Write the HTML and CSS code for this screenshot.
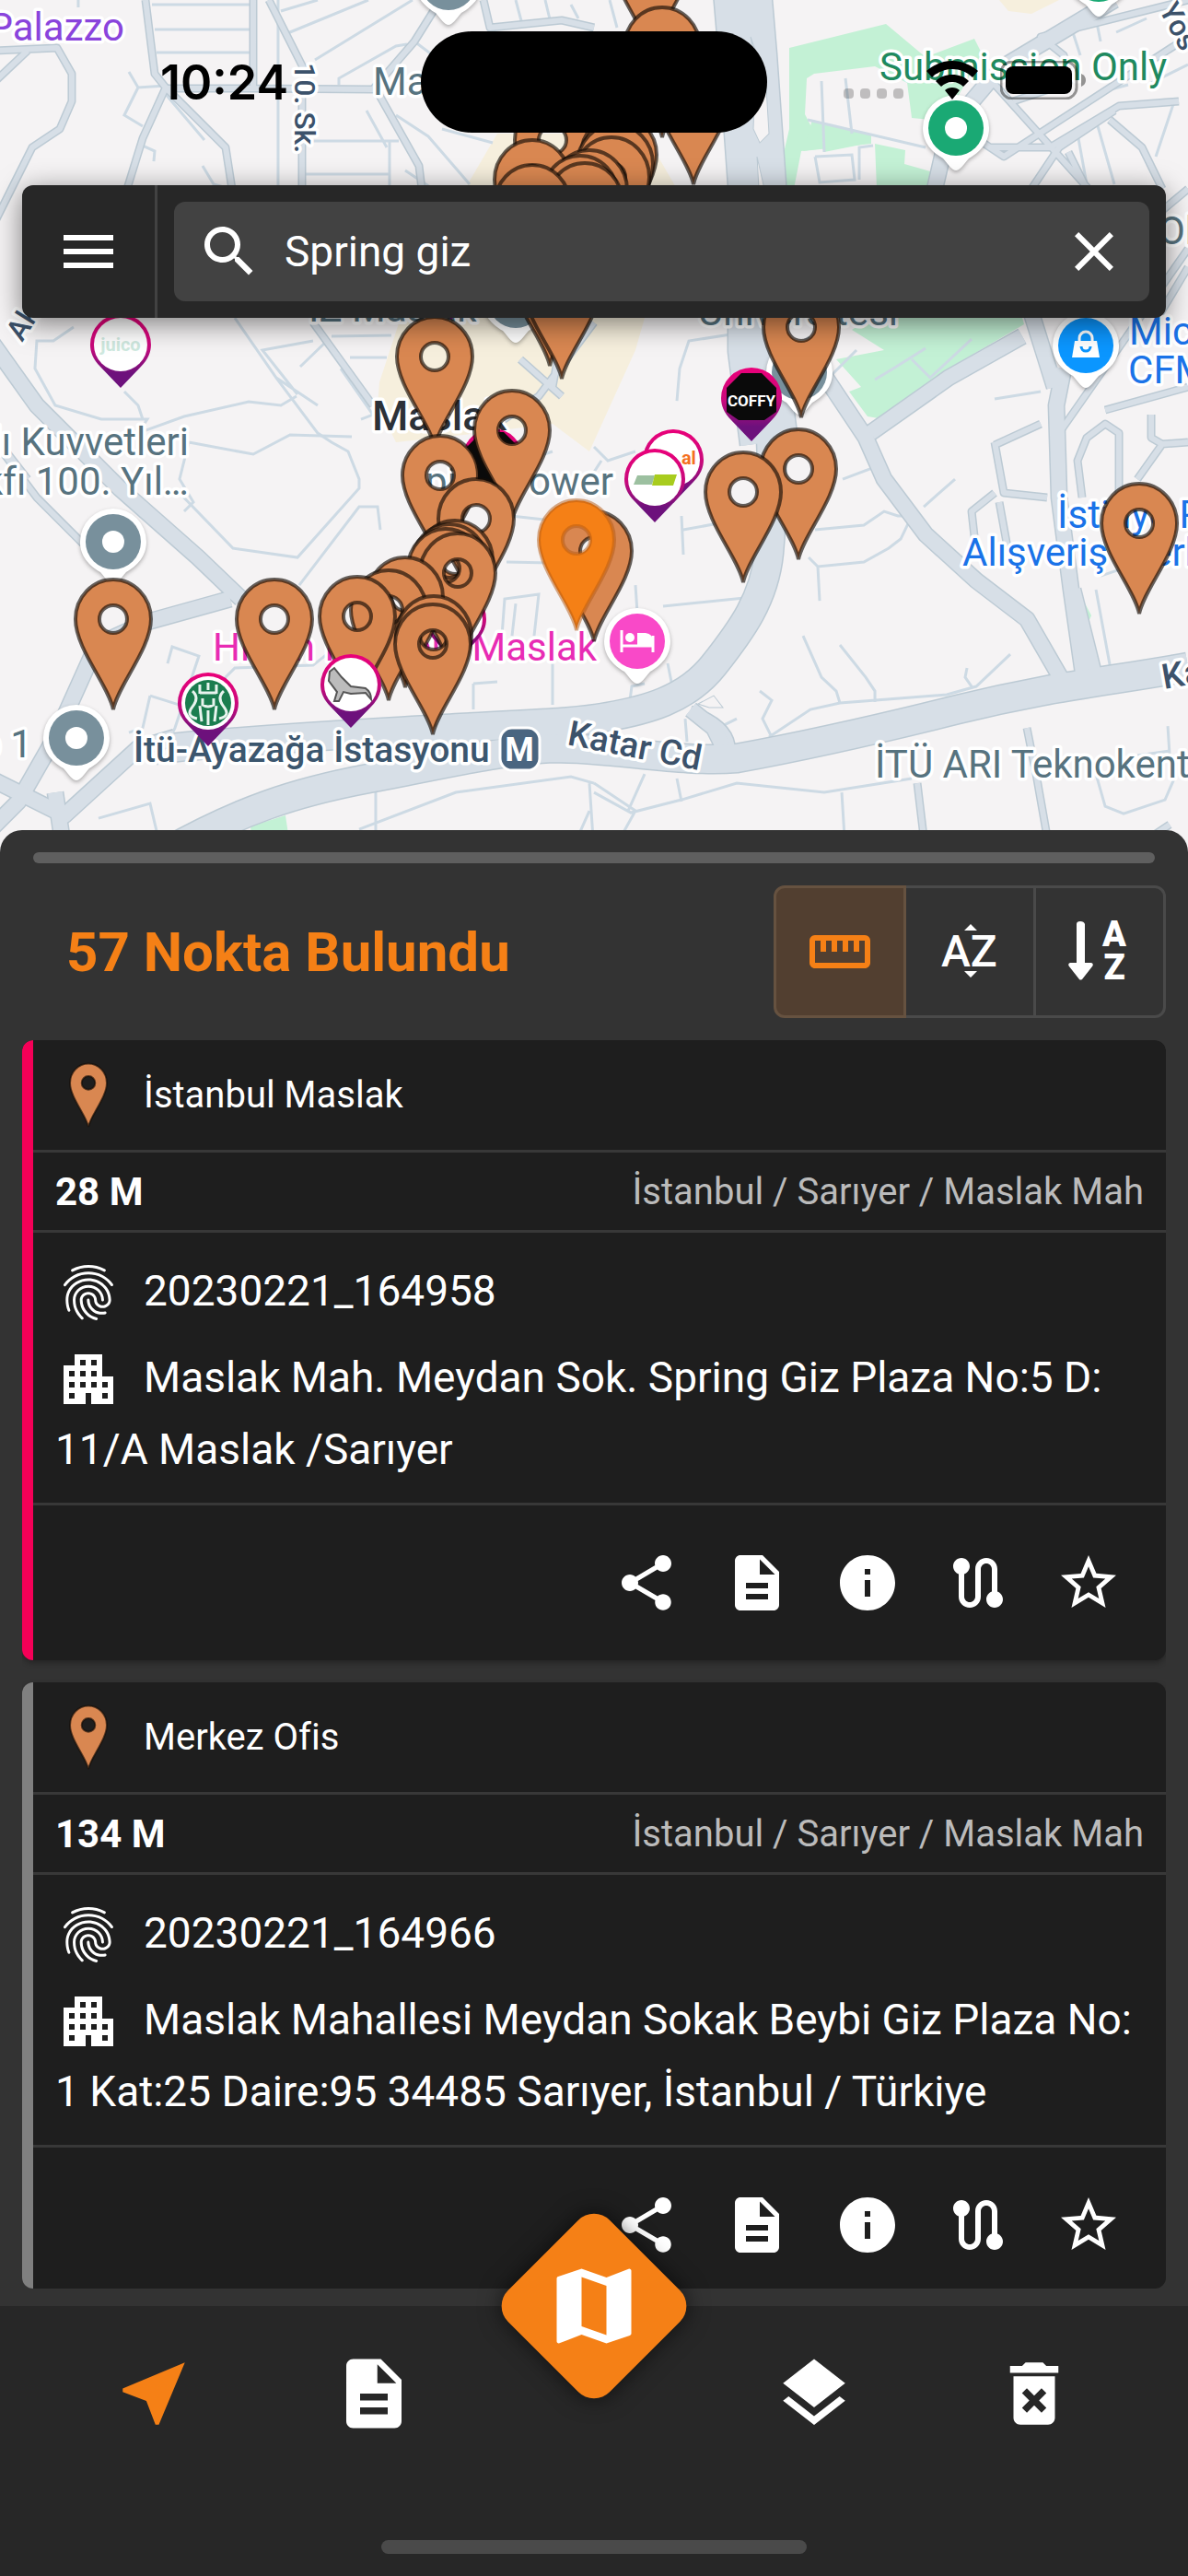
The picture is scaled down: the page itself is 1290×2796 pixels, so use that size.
FILE: index.html
```html
<!DOCTYPE html>
<html lang="tr">
<head>
    <meta charset="UTF-8">
    <meta name="viewport" content="width=device-width, initial-scale=1.0">
    <title>Nokta Arama</title>
    <link rel="stylesheet" href="styles.css">
</head>
<body>
    <!-- Icon set -->
    <svg class="sprite" aria-hidden="true">
        <symbol id="i-menu" viewBox="0 0 24 24"><path d="M3 18h18v-2H3v2zm0-5h18v-2H3v2zm0-7v2h18V6H3z"/></symbol>
        <symbol id="i-search" viewBox="0 0 24 24"><path d="M15.5 14h-.79l-.28-.27C15.41 12.59 16 11.11 16 9.5 16 5.91 13.09 3 9.5 3S3 5.91 3 9.5 5.91 16 9.5 16c1.61 0 3.09-.59 4.23-1.57l.27.28v.79l5 4.99L20.49 19l-4.99-5zm-6 0C7.01 14 5 11.99 5 9.5S7.01 5 9.5 5 14 7.01 14 9.5 11.99 14 9.5 14z"/></symbol>
        <symbol id="i-close" viewBox="0 0 24 24"><path d="M19 6.41L17.59 5 12 10.59 6.41 5 5 6.41 10.59 12 5 17.59 6.41 19 12 13.41 17.59 19 19 17.59 13.41 12z"/></symbol>
        <symbol id="i-ruler" viewBox="0 0 24 24"><path d="M21 6H3c-1.1 0-2 .9-2 2v8c0 1.1.9 2 2 2h18c1.1 0 2-.9 2-2V8c0-1.1-.9-2-2-2zm0 10H3V8h2v4h2V8h2v4h2V8h2v4h2V8h2v4h2V8h2v8z"/></symbol>
        <symbol id="i-share" viewBox="0 0 24 24"><path d="M18 16.08c-.76 0-1.44.3-1.96.77L8.91 12.7c.05-.23.09-.46.09-.7s-.04-.47-.09-.7l7.05-4.11c.54.5 1.25.81 2.04.81 1.66 0 3-1.34 3-3s-1.34-3-3-3-3 1.34-3 3c0 .24.04.47.09.7L8.04 9.81C7.5 9.31 6.79 9 6 9c-1.66 0-3 1.34-3 3s1.34 3 3 3c.79 0 1.5-.31 2.04-.81l7.12 4.16c-.05.21-.08.43-.08.65 0 1.61 1.31 2.92 2.92 2.92s2.92-1.31 2.92-2.92-1.31-2.92-2.92-2.92z"/></symbol>
        <symbol id="i-doc" viewBox="0 0 24 24"><path d="M14 2H6c-1.1 0-1.99.9-1.99 2L4 20c0 1.1.89 2 1.99 2H18c1.1 0 2-.9 2-2V8l-6-6zm2 16H8v-2h8v2zm0-4H8v-2h8v2zm-3-5V3.5L18.5 9H13z"/></symbol>
        <symbol id="i-info" viewBox="0 0 24 24"><path d="M12 2C6.48 2 2 6.48 2 12s4.48 10 10 10 10-4.48 10-10S17.52 2 12 2zm1 15h-2v-6h2v6zm0-8h-2V7h2v2z"/></symbol>
        <symbol id="i-route" viewBox="0 0 24 24"><path d="M19 15.18V7c0-2.21-1.79-4-4-4s-4 1.79-4 4v10c0 1.1-.9 2-2 2s-2-.9-2-2V8.82C8.16 8.4 9 7.3 9 6c0-1.66-1.34-3-3-3S3 4.34 3 6c0 1.3.84 2.4 2 2.82V17c0 2.21 1.79 4 4 4s4-1.79 4-4V7c0-1.1.9-2 2-2s2 .9 2 2v8.18c-1.16.41-2 1.51-2 2.82 0 1.66 1.34 3 3 3s3-1.34 3-3c0-1.3-.84-2.4-2-2.82z"/></symbol>
        <symbol id="i-star" viewBox="0 0 24 24"><path d="M22 9.24l-7.19-.62L12 2 9.19 8.63 2 9.24l5.46 4.73L5.82 21 12 17.27 18.18 21l-1.63-7.03L22 9.24zM12 15.4l-3.76 2.27 1-4.28-3.32-2.88 4.38-.38L12 6.1l1.71 4.04 4.38.38-3.32 2.88 1 4.28L12 15.4z"/></symbol>
        <symbol id="i-map" viewBox="0 0 24 24"><path d="M20.5 3l-.16.03L15 5.1 9 3 3.36 4.9c-.21.07-.36.25-.36.48V20.5c0 .28.22.5.5.5l.16-.03L9 18.9l6 2.1 5.64-1.9c.21-.07.36-.25.36-.48V3.5c0-.28-.22-.5-.5-.5zM15 19l-6-2.11V5l6 2.11V19z"/></symbol>
        <symbol id="i-near" viewBox="0 0 24 24"><path d="M21 3L3 10.53v.98l6.84 2.65L12.48 21h.98L21 3z"/></symbol>
        <symbol id="i-layers" viewBox="0 0 24 24"><path d="M11.99 18.54l-7.37-5.73L3 14.07l9 7 9-7-1.63-1.27-7.38 5.74zM12 16l7.36-5.73L21 9l-9-7-9 7 1.63 1.27L12 16z"/></symbol>
        <symbol id="i-trash" viewBox="0 0 24 24"><path d="M6 19c0 1.1.9 2 2 2h8c1.1 0 2-.9 2-2V7H6v12zm2.46-7.12l1.41-1.41L12 12.59l2.12-2.12 1.41 1.41L13.41 14l2.12 2.12-1.41 1.41L12 15.41l-2.12 2.12-1.41-1.41L10.59 14l-2.13-2.12zM15.5 4l-1-1h-5l-1 1H5v2h14V4z"/></symbol>
        <symbol id="i-building" viewBox="0 0 24 24"><path d="M17 11V3H7v4H3v14h8v-4h2v4h8V11h-4zM7 19H5v-2h2v2zm0-4H5v-2h2v2zm0-4H5V9h2v2zm4 4H9v-2h2v2zm0-4H9V9h2v2zm0-4H9V5h2v2zm4 8h-2v-2h2v2zm0-4h-2V9h2v2zm0-4h-2V5h2v2zm4 12h-2v-2h2v2zm0-4h-2v-2h2v2z"/></symbol>
        <symbol id="i-finger" viewBox="0 0 24 24"><path d="M17.81 4.47c-.08 0-.16-.02-.23-.06C15.66 3.42 14 3 12.01 3c-1.98 0-3.86.47-5.57 1.41-.24.13-.54.04-.68-.2-.13-.24-.04-.55.2-.68C7.82 2.52 9.86 2 12.01 2c2.13 0 3.99.47 6.03 1.52.25.13.34.43.21.67-.09.18-.26.28-.44.28zM3.5 9.72c-.1 0-.2-.03-.29-.09-.23-.16-.28-.47-.12-.7.99-1.4 2.25-2.5 3.75-3.27C9.98 4.04 14 4.03 17.15 5.65c1.5.77 2.76 1.86 3.75 3.25.16.22.11.54-.12.7-.23.16-.54.11-.7-.12-.9-1.26-2.04-2.25-3.39-2.94-2.87-1.47-6.54-1.47-9.4.01-1.36.7-2.5 1.7-3.4 2.96-.08.14-.23.21-.39.21zm6.25 12.07c-.13 0-.26-.05-.35-.15-.87-.87-1.34-1.43-2.01-2.64-.69-1.23-1.05-2.73-1.05-4.34 0-2.97 2.54-5.39 5.66-5.39s5.66 2.42 5.66 5.39c0 .28-.22.5-.5.5s-.5-.22-.5-.5c0-2.42-2.09-4.39-4.66-4.39-2.57 0-4.66 1.97-4.66 4.39 0 1.44.32 2.77.93 3.85.64 1.15 1.08 1.64 1.85 2.42.19.2.19.51 0 .71-.11.1-.24.15-.37.15zm7.17-1.85c-1.19 0-2.24-.3-3.1-.89-1.49-1.01-2.38-2.65-2.38-4.39 0-.28.22-.5.5-.5s.5.22.5.5c0 1.41.72 2.74 1.94 3.56.71.48 1.54.71 2.54.71.24 0 .64-.03 1.04-.1.27-.05.53.13.58.41.05.27-.13.53-.41.58-.57.11-1.07.12-1.21.12zM14.91 22c-.04 0-.09-.01-.13-.02-1.59-.44-2.63-1.03-3.72-2.1-1.4-1.39-2.17-3.24-2.17-5.22 0-1.62 1.38-2.94 3.08-2.94 1.7 0 3.08 1.32 3.08 2.94 0 1.07.93 1.94 2.08 1.94s2.08-.87 2.08-1.94c0-3.77-3.25-6.83-7.25-6.83-2.84 0-5.44 1.58-6.61 4.03-.39.81-.59 1.76-.59 2.8 0 .78.07 2.01.67 3.61.1.26-.03.55-.29.64-.26.1-.55-.04-.64-.29-.49-1.31-.73-2.61-.73-3.96 0-1.2.23-2.29.68-3.24 1.33-2.79 4.28-4.6 7.51-4.6 4.55 0 8.25 3.51 8.25 7.83 0 1.62-1.38 2.94-3.08 2.94s-3.08-1.32-3.08-2.94c0-1.07-.93-1.94-2.08-1.94s-2.08.87-2.08 1.94c0 1.71.66 3.31 1.87 4.51.95.94 1.86 1.46 3.27 1.85.27.07.42.35.35.61-.05.23-.26.38-.47.38z"/></symbol>
        <symbol id="i-pin" viewBox="-44 -144 88 148">
            <path class="pin" fill-rule="evenodd" d="M0 0C-5-26-41-66-41-98A41 43 0 0 1 41-98C41-66 5-26 0 0ZM-15-98A15 15 0 1 0 15-98A15 15 0 1 0-15-98Z"/>
        </symbol>
    </svg>

    <div class="app">
        <main class="map-view">
            <svg class="map" viewBox="0 0 1290 925" preserveAspectRatio="xMidYMin slice" role="img" aria-label="Harita">
                <defs>
                    <linearGradient id="brand" x1="0" y1="0" x2="0" y2="1">
                        <stop offset="0" stop-color="#ea0079"/>
                        <stop offset="0.45" stop-color="#c80a7c"/>
                        <stop offset="0.8" stop-color="#6d117c"/>
                    </linearGradient>
                    <!-- store pins: tip at 0,0 -->
                    <path id="pin" fill-rule="evenodd" d="M0 0C-5-26-41-66-41-98A41 43 0 0 1 41-98C41-66 5-26 0 0ZM-15-98A15 15 0 1 0 15-98A15 15 0 1 0-15-98Z"/>
                    <!-- place and brand pins: circle centre at 0,0 -->
                    <path id="drop" d="M0 46C-4 46-8 40-14 33C-26 26-36 16-36 0A36 36 0 0 1 36 0C36 16 26 26 14 33C8 40 4 46 0 46Z"/>
                    <path id="brand-drop" d="M0 47L-22 24C-30 16-33 8-33 0A33 33 0 0 1 33 0C33 8 30 16 22 24Z"/>
                    <g id="roads-xl">
                        <path d="M183 812C300 800 420 795 500 790S620 785 660 778S745 760 775 722S830 650 835 600S838 480 835 440"/>
                        <path d="M180 925C260 880 320 860 400 845C480 830 540 815 600 812C670 812 740 828 800 823C860 812 940 795 1040 770S1200 740 1290 724"/>
                    </g>
                    <g id="roads-l">
                        <path d="M835 480L822 380L822 200L812 60L806 -10"/>
                    </g>
                    <g id="roads-m">
                        <path d="M250 650L160 675L105 700L60 800L20 870L-10 900"/>
                        <path d="M-10 845L70 885L150 812L190 800"/>
                        <path d="M60 860L72 940"/>
                        <path d="M-10 370L40 440L130 530L215 605L262 650"/>
                        <path d="M1155 400L1147 440L1150 540L1163 640L1178 745"/>
                        <path d="M870 370L940 475L960 520L1005 580L1060 630L1115 672L1160 750"/>
                        <path d="M945 470L1030 410L1110 365"/>
                        <path d="M1120 340L1145 420"/>
                        <path d="M1165 640L1190 740"/>
                        <path d="M1210 0L1085 75L1030 140L1015 205"/>
                        <path d="M790 820L775 790L750 770"/>
                    </g>
                    <g id="roads-s">
                        <path d="M-5 55L62 52L78 80L78 110L65 140L35 160L-5 240"/>
                        <path d="M-5 88L30 55"/>
                        <path d="M158 0L168 80L180 95L245 160L252 205M180 95L155 150L138 205"/>
                        <path d="M292 0L330 75M275 0L275 96M180 96L275 96L405 97L450 45L475 5"/>
                        <path d="M328 98L328 205M410 100L455 180L458 205"/>
                        <path d="M525 0L532 30L610 22L645 30"/>
                        <path d="M640 200L600 420M645 350L585 430L540 460M565 390L610 430"/>
                        <path d="M340 350L405 440"/>
                        <path d="M1065 75L1200 225M1075 160L1140 160L1215 115L1280 110M1060 150L1090 170L1290 40M1120 205L1150 160L1210 120M1205 130L1240 160L1262 205M1160 165L1180 205"/>
                        <path d="M1100 110L1160 90L1155 60L1130 40L1290 0"/>
                        <path d="M1290 205L1260 230M1290 270L1220 370L1150 470M1260 340L1290 290M1200 445L1290 420"/>
                        <path d="M1080 483L1130 460M1080 480L1090 535L1137 540M1080 535L1055 555L1060 600M1085 545L1095 600M1175 540L1170 500L1180 475L1200 460L1215 470L1215 560M1250 450L1250 475L1262 482L1290 480M1262 482L1235 520"/>
                        <path d="M1115 790L1125 840L1140 925M996 850L1005 925M1225 925L1270 895"/>
                        <path d="M750 770Q795 785 795 815"/>
                        <path d="M-5 480L40 540L90 590M-5 475L30 520"/>
                    </g>
                </defs>

                <rect class="land" x="-10" y="-10" width="1310" height="960"/>
                <path class="built" d="M540 145L700 145L735 205L505 205Z"/>
                <path class="built" d="M435 345L700 345L690 380L640 490L600 460L520 470L430 480L410 440L412 415Z"/>
                <path class="built" d="M1085 0L1150 0L1120 15L1095 12Z"/>
                <path class="park" d="M857 52L962 26L1005 62L1058 42L1066 58L1040 105L1010 130L990 128L985 90L950 72L884 80L876 85L874 124L895 165L945 155L870 164L862 205L842 205L857 140Z"/>
                <path class="park" d="M882 130L946 146L946 156L872 164Z"/>
                <path class="park" d="M950 156L983 163L982 178L1010 186L1010 205L952 205Z"/>
                <path class="park" d="M925 358L945 345L1110 345L1112 352L1030 400L960 455L942 452L922 425L935 420L908 390L960 380Z"/>
                <path class="park" d="M272 897L310 885L316 925L275 925Z"/>
                <path class="park" d="M1170 640L1185 668L1182 675Z"/>

                <g class="lanes">
                    <path d="M165 5L275 5M168 32L275 32M170 57L275 57M302 0L302 205M85 0L85 8M140 78L150 95L180 93M150 95L135 125L155 137M155 158L168 164L167 175M178 100L222 152M220 180L232 200L250 205"/>
                    <path d="M305 12L345 0M310 37L400 0M342 65L448 0M368 92L368 85L430 50L442 48M340 153L433 153M332 189L423 189M423 153L423 205M398 120L420 160M430 125L465 148L510 200M480 140L535 155M440 185L470 205M450 45L510 90"/>
                    <path d="M560 0L568 30M592 0L598 25M620 5L628 20"/>
                    <path d="M255 345L300 410L345 470L360 480L378 490L390 520L390 530L323 605L253 595L190 530M323 428L285 380L340 370M300 410L345 440M326 398L355 370M360 365L425 364M380 388L420 388M370 400L405 450L392 455M80 355L58 370L40 370L38 400L60 440L110 455L160 455L150 470L200 452L270 436L305 440L322 430M135 425L150 440L155 455"/>
                    <path d="M205 480L275 493L315 472L382 474M325 635L390 550L410 550L413 575M205 480L195 520L210 545L200 555"/>
                    <path d="M182 720L187 702L216 712L190 790L170 830M163 755L155 790L140 795M163 755L195 765M245 735L255 725L340 722L355 710M245 735L230 760M514 742L514 770M514 742L540 740M600 720L600 765M545 690L548 650L585 645L580 690M560 655L556 690M555 560L645 570M550 610L645 612"/>
                    <path d="M540 480L570 500L600 490M550 470L555 500M645 485L660 500L690 490M653 500L640 520"/>
                    <path d="M107 888L163 872L172 910M390 900L495 860L620 843L645 850M408 860L408 925M620 925L640 880M640 850L645 925"/>
                    <path d="M645 860L685 882L740 868L800 850L895 860L990 845M914 860L918 925M665 925L690 880L645 850M735 845L740 870M700 840L682 880"/>
                    <path d="M740 560L742 602M742 575L780 568M720 658L818 648M690 635L692 665M885 575L938 570L960 555L975 560L988 560M878 605L888 615L938 610L965 595L978 585L990 560M888 615L890 652M915 520L955 505M1003 550L1037 520M872 690L892 735L908 750L912 763M912 700L940 735L950 750L950 762M835 800L880 770L912 763L1028 754L1060 745L1097 710M1050 725L1048 735L1055 745M825 750L838 760L828 780L838 800"/>
                    <path d="M725 720L730 745M684 760L686 745L700 742M744 780L746 805M770 795L800 780M1190 640L1207 732L1250 722M1195 625L1225 615M1190 840L1200 875L1220 883L1265 868L1275 845M1268 788L1270 820M1235 820L1270 815"/>
                    <path d="M735 435L738 400L748 370L800 362M1005 378L970 400L950 412M1055 368L1010 410L990 390M955 350L975 350M895 415L930 380M1080 433L1130 425"/>
                    <path d="M892 88L895 165M918 85L925 145M877 130L1005 160M885 170L925 168L928 195L890 198L885 170M933 195L933 160L948 158M1160 20L1173 60M1190 20L1195 45M1212 35L1245 20M1250 90L1290 70M1275 110L1255 170M1195 100L1225 92M1170 145L1180 200M1190 130L1210 200M670 30L662 0M832 0L834 18"/>
                </g>
                <g class="edge">
                    <use href="#roads-s" class="w-s"/>
                    <use href="#roads-m" class="w-m"/>
                    <use href="#roads-l" class="w-l"/>
                    <use href="#roads-xl" class="w-xl"/>
                </g>
                <g class="fill">
                    <use href="#roads-s" class="w-s"/>
                    <use href="#roads-m" class="w-m"/>
                    <use href="#roads-l" class="w-l"/>
                    <use href="#roads-xl" class="w-xl"/>
                </g>
                <path class="island-gap" d="M815 40L822 60L818 55ZM820 85L832 95L835 145L825 155L818 140ZM822 170L830 205L824 205ZM758 764L775 755L785 768L770 768Z"/>

                <!-- Map labels -->
                <g class="label">
                    <text class="c-violet" x="135" y="44" text-anchor="end">Palazzo</text>
                    <text class="c-road small" transform="translate(320 68) rotate(90)">10. Sk.</text>
                    <text class="c-place" x="405" y="103">Maslak</text>
                    <text class="c-green" x="955" y="87">Submission Only</text>
                    <text class="c-road small" transform="translate(1258 10) rotate(62)">Yos</text>
                    <text class="c-place" x="335" y="349">İZ Maslak</text>
                    <text class="c-place" x="758" y="353">Üniversitesi</text>
                    <text class="c-place" x="1258" y="265">Ok</text>
                    <text class="c-road small" transform="translate(24 372) rotate(-58)">Akın</text>
                    <text class="c-blue" x="1226" y="374">Mic</text>
                    <text class="c-blue" x="1225" y="416">CFM</text>
                    <text class="c-town" x="404" y="467">Maslak</text>
                    <text class="c-place" x="205" y="494" text-anchor="end">lı Kuvvetleri</text>
                    <text class="c-place" x="205" y="537" text-anchor="end">kfı 100. Yıl…</text>
                    <text class="c-place" x="666" y="537" text-anchor="end">Spine Tower</text>
                    <text class="c-blue" x="1148" y="573">İstinye P</text>
                    <text class="c-blue" x="1045" y="614">Alışveriş Merk</text>
                    <text class="c-pink" x="231" y="717">Hilton İstanbul Maslak</text>
                    <text class="c-place" x="35" y="822" text-anchor="end">p 1</text>
                    <text class="c-metro" x="145" y="827">İtü-Ayazağa İstasyonu</text>
                    <text class="c-road" transform="translate(615 808) rotate(11)">Katar Cd</text>
                    <text class="c-road" transform="translate(1264 748) rotate(-10)">Ka</text>
                    <text class="c-place" x="950" y="844">İTÜ ARI Teknokent</text>
                </g>
                <rect class="metro-sign" x="543" y="790" width="43" height="46" rx="13"/>
                <text class="metro-letter" x="564" y="826">M</text>

                <!-- Places -->
                <g class="places">
                    <g class="grey" transform="translate(487 -19)"><use href="#drop"/><circle r="30"/></g>
                    <g class="green" transform="translate(1193 -28)"><use href="#drop"/><circle r="30"/></g>
                    <g class="green" transform="translate(1038 139)"><use href="#drop"/><circle r="30"/><circle class="dot" r="12"/></g>
                    <g class="grey" transform="translate(560 326)"><use href="#drop"/><circle r="30"/></g>
                    <g class="grey" transform="translate(868 404)"><use href="#drop"/><circle r="30"/></g>
                    <g class="grey" transform="translate(123 588)"><use href="#drop"/><circle r="30"/><circle class="dot" r="12"/></g>
                    <g class="grey" transform="translate(83 801)"><use href="#drop"/><circle r="30"/><circle class="dot" r="12"/></g>
                    <g class="blue" transform="translate(1179 375)"><use href="#drop"/><circle r="30"/>
                        <path class="dot" d="M-12-5H12L15 13H-15Z"/><path class="line" d="M-7-4V-8A7 7 0 0 1 7-8V-4"/><path class="smile" d="M-5 1A5 5 0 0 0 5 1"/></g>
                    <g class="hotel" transform="translate(692 696)"><use href="#drop"/><circle r="30"/>
                        <path class="line" d="M-17-12V12M17-6V12M-17 5H17"/><circle class="dot" cx="-8" cy="-4" r="5"/><path class="dot" d="M0-9H9Q17-8 17 0V4H0Z"/></g>
                </g>

                <!-- Brand pins -->
                <g class="brands">
                    <g transform="translate(131 374)"><use href="#brand-drop"/><circle r="29"/><text class="juico" y="7">juico</text></g>
                    <g transform="translate(490 300)"><use href="#brand-drop"/><circle r="29"/></g>
                    <g transform="translate(535 498)"><use href="#brand-drop"/><path class="black" d="M-12-29H12L29-12V12L12 29H-12L-29 12V-12Z"/></g>
                    <g transform="translate(816 432)"><use href="#brand-drop"/><path class="black" d="M-11-27H11L27-11V15L14 24H-14L-27 15V-11Z"/><text class="coffy" y="9">COFFY</text></g>
                    <g transform="translate(731 499)"><use href="#brand-drop"/><circle r="29"/><text class="hot" x="14" y="5">.al</text></g>
                    <g transform="translate(711 520)"><use href="#brand-drop"/><circle r="29"/><path class="sub-a" d="M-19-4H0L-3 6H-23Z"/><path class="sub-b" d="M0-5H24L20 7H-3Z"/></g>
                    <g transform="translate(495 672)"><use href="#brand-drop"/><circle r="29"/></g>
                </g>

                <!-- Store pins -->
                <g class="pins">
                    <use href="#pin" x="707" y="58"/>
                    <use href="#pin" x="719" y="149"/>
                    <use href="#pin" x="753" y="200"/>
                    <use href="#pin" x="600" y="250"/>
                    <use href="#pin" x="672" y="266"/>
                    <use href="#pin" x="668" y="276"/>
                    <use href="#pin" x="578" y="293"/>
                    <use href="#pin" x="664" y="290"/>
                    <use href="#pin" x="640" y="304"/>
                    <use href="#pin" x="630" y="310"/>
                    <use href="#pin" x="635" y="318"/>
                    <use href="#pin" x="578" y="320"/>
                    <use href="#pin" x="597" y="397"/>
                    <use href="#pin" x="610" y="411"/>
                    <use href="#pin" x="870" y="453"/>
                    <use href="#pin" x="472" y="485"/>
                    <use href="#pin" x="478" y="614"/>
                    <use href="#pin" x="556" y="565"/>
                    <use href="#pin" x="517" y="661"/>
                    <use href="#pin" x="867" y="607"/>
                    <use href="#pin" x="807" y="632"/>
                    <use href="#pin" x="1237" y="666"/>
                    <use href="#pin" x="494" y="706"/>
                    <use href="#pin" x="488" y="710"/>
                    <use href="#pin" x="484" y="715"/>
                    <use href="#pin" x="497" y="720"/>
                    <use href="#pin" x="440" y="746"/>
                    <use href="#pin" x="422" y="760"/>
                    <use href="#pin" x="388" y="767"/>
                    <use href="#pin" x="471" y="788"/>
                    <use href="#pin" x="470" y="797"/>
                    <use href="#pin" x="298" y="770"/>
                    <use href="#pin" x="123" y="770"/>
                    <use href="#pin" x="645" y="696"/>
                    <use href="#pin" class="selected" x="626" y="684"/>
                </g>

                <g class="brands">
                    <g transform="translate(226 763)"><use href="#brand-drop"/><circle r="29"/><circle class="siren" r="25"/>
                        <path class="siren-line" d="M-17-13Q-9-6-17 4T-12 17M17-13Q9-6 17 4T12 17M-9-20V-10M9-20V-10M-9-11H9M-6-5V2Q0 6 6 2V-5M-9 3L-7 20M9 3L7 20M0 8V24M0-22V-14"/></g>
                    <g transform="translate(381 743)"><use href="#brand-drop"/><circle r="29"/><path class="dog" d="M-23-14L-18-18L-10-8L0 2L16 4Q22 8 22 16L16 9L0 10L-8 8L-13 18H-18L-15 8L-24-4Z"/></g>
                </g>
            </svg>

            <div class="status-bar">
                <time class="clock">10:24</time>
                <span class="island"></span>
                <div class="signals">
                    <svg class="dots" viewBox="0 0 66 42" aria-hidden="true"><rect y="30" width="11" height="11" rx="4"/><rect x="18" y="30" width="11" height="11" rx="4"/><rect x="36" y="30" width="11" height="11" rx="4"/><rect x="54" y="30" width="11" height="11" rx="4"/></svg>
                    <svg class="wifi" viewBox="0 0 56 42" aria-hidden="true"><path d="M28 0C38 0 48 4 56 11L50 18C44 12 36 9 28 9S12 12 6 18L0 11C8 4 18 0 28 0ZM28 15C35 15 41 17 46 22L40 28C37 25 33 23 28 23S19 25 16 28L10 22C15 17 21 15 28 15ZM28 29C31 29 34 30 36 32L28 42L20 32C22 30 25 29 28 29Z"/></svg>
                    <svg class="battery" viewBox="0 0 93 42" aria-hidden="true"><rect class="shell" x="1" y="1" width="82" height="40" rx="12"/><rect x="6" y="6" width="72" height="30" rx="8"/><path class="nub" d="M88 14Q93 16 93 21T88 28Z"/></svg>
                </div>
            </div>

            <form class="search-bar" role="search">
                <button class="menu-btn" type="button" aria-label="Menü"><svg class="icon"><use href="#i-menu"/></svg></button>
                <div class="search-field">
                    <label for="q" aria-label="Ara"><svg class="icon"><use href="#i-search"/></svg></label>
                    <input id="q" type="text" value="Spring giz">
                    <button type="button" aria-label="Temizle"><svg class="icon"><use href="#i-close"/></svg></button>
                </div>
            </form>
        </main>

        <section class="sheet">
            <div class="handle"></div>
            <div class="sheet-head">
                <h1>57 Nokta Bulundu</h1>
                <div class="sort-group">
                    <button class="active" type="button" aria-label="Mesafeye göre sırala"><svg class="icon"><use href="#i-ruler"/></svg></button>
                    <button type="button" aria-label="İsme göre sırala">
                        <svg class="icon" viewBox="0 0 72 72"><text class="az" x="5" y="52">AZ</text><path d="M30 13L37 6L44 13ZM30 57L37 64L44 57Z"/></svg>
                    </button>
                    <button type="button" aria-label="A'dan Z'ye sırala">
                        <svg class="icon" viewBox="0 0 72 72"><path d="M11 6Q11 3 15 3T20 6V48H27Q30 49 28 52L17 66Q15 67 14 66L3 52Q1 49 4 48H11Z"/><text class="az-bold" x="52" y="30">A</text><text class="az-bold" x="52" y="66">Z</text></svg>
                    </button>
                </div>
            </div>

            <div class="list">
                <article class="card nearest">
                    <header class="card-head">
                        <svg class="icon"><use href="#i-pin"/></svg>
                        <h2>İstanbul Maslak</h2>
                    </header>
                    <div class="card-meta">
                        <strong>28 M</strong>
                        <span>İstanbul / Sarıyer / Maslak Mah</span>
                    </div>
                    <div class="card-body">
                        <p><svg class="icon"><use href="#i-finger"/></svg>20230221_164958</p>
                        <p><svg class="icon"><use href="#i-building"/></svg>Maslak Mah. Meydan Sok. Spring Giz Plaza No:5 D:<br>11/A Maslak /Sarıyer</p>
                    </div>
                    <footer class="card-actions">
                        <button type="button" aria-label="Paylaş"><svg class="icon"><use href="#i-share"/></svg></button>
                        <button type="button" aria-label="Form"><svg class="icon"><use href="#i-doc"/></svg></button>
                        <button type="button" aria-label="Bilgi"><svg class="icon"><use href="#i-info"/></svg></button>
                        <button type="button" aria-label="Rota"><svg class="icon"><use href="#i-route"/></svg></button>
                        <button type="button" aria-label="Favori"><svg class="icon"><use href="#i-star"/></svg></button>
                    </footer>
                </article>

                <article class="card">
                    <header class="card-head">
                        <svg class="icon"><use href="#i-pin"/></svg>
                        <h2>Merkez Ofis</h2>
                    </header>
                    <div class="card-meta">
                        <strong>134 M</strong>
                        <span>İstanbul / Sarıyer / Maslak Mah</span>
                    </div>
                    <div class="card-body">
                        <p><svg class="icon"><use href="#i-finger"/></svg>20230221_164966</p>
                        <p><svg class="icon"><use href="#i-building"/></svg>Maslak Mahallesi Meydan Sokak Beybi Giz Plaza No:<br>1 Kat:25 Daire:95 34485 Sarıyer, İstanbul / Türkiye</p>
                    </div>
                    <footer class="card-actions">
                        <button type="button" aria-label="Paylaş"><svg class="icon"><use href="#i-share"/></svg></button>
                        <button type="button" aria-label="Form"><svg class="icon"><use href="#i-doc"/></svg></button>
                        <button type="button" aria-label="Bilgi"><svg class="icon"><use href="#i-info"/></svg></button>
                        <button type="button" aria-label="Rota"><svg class="icon"><use href="#i-route"/></svg></button>
                        <button type="button" aria-label="Favori"><svg class="icon"><use href="#i-star"/></svg></button>
                    </footer>
                </article>
            </div>
        </section>

        <nav class="bottom-nav">
            <div class="nav-items">
                <button class="active" type="button" aria-label="Yakınımda"><svg class="icon"><use href="#i-near"/></svg></button>
                <button type="button" aria-label="Formlar"><svg class="icon"><use href="#i-doc"/></svg></button>
                <span class="nav-gap"></span>
                <button type="button" aria-label="Katmanlar"><svg class="icon"><use href="#i-layers"/></svg></button>
                <button type="button" aria-label="Sil"><svg class="icon"><use href="#i-trash"/></svg></button>
            </div>
            <button class="map-btn" type="button" aria-label="Harita"><svg class="icon"><use href="#i-map"/></svg></button>
            <div class="home-indicator"></div>
        </nav>
    </div>
</body>
</html>
```
FILE: styles.css
```css
* {
    box-sizing: border-box;
}

body {
    margin: 0;
    font-family: Roboto, "Liberation Sans", sans-serif;
    font-size: 46px;
    color: #fff;
    background: #272727;
}

h1, h2, p {
    margin: 0;
}

button {
    display: flex;
    align-items: center;
    justify-content: center;
    padding: 0;
    border: 0;
    background: none;
    color: inherit;
    font: inherit;
    cursor: pointer;
}

.sprite {
    position: absolute;
    width: 0;
    height: 0;
}

.icon {
    width: 72px;
    height: 72px;
    fill: currentColor;
}

.app {
    display: grid;
    grid-template-columns: minmax(0, 1fr);
    grid-template-rows: minmax(0, 9fr) minmax(0, 16fr) auto;
    height: 100vh;
}

/* Map */
.map-view {
    position: relative;
    padding: 34px 24px 0;
}

.map {
    position: absolute;
    top: 0;
    left: 0;
    width: 100%;
    height: calc(100% + 24px);
}

.land {
    fill: #f5f3f4;
}

.built {
    fill: #f6efdd;
}

.park {
    fill: #c3f1d5;
}

.lanes path {
    fill: none;
    stroke: #cddae4;
    stroke-width: 3;
}

.edge, .fill {
    fill: none;
    stroke-linejoin: round;
    --edge: 0px;
}

.edge {
    stroke: #bccad4;
    --edge: 3px;
}

.fill {
    stroke: #d7dfe7;
}

.w-s {
    stroke-width: calc(6px + var(--edge));
}

.w-m {
    stroke-width: calc(16px + var(--edge));
}

.w-xl {
    stroke-width: calc(30px + var(--edge));
}

.w-l {
    stroke-width: calc(62px + var(--edge));
}

.island-gap {
    fill: #f5f3f4;
    stroke: #bccad4;
}

.label {
    font-family: Roboto, sans-serif;
    font-size: 42px;
    stroke: #fff;
    stroke-width: 7px;
    stroke-linejoin: round;
    paint-order: stroke;
}

.c-place { fill: #57737f; }
.c-violet { fill: #8a44dc; }
.c-green { fill: #1f8a5f; }
.c-blue { fill: #1a73e8; }
.c-pink { fill: #e82cb4; }

.c-road {
    fill: #3c526b;
    font-size: 38px;
    font-weight: 500;
}

.small {
    font-size: 32px;
}

.c-metro {
    fill: #3b566e;
    font-size: 39px;
    font-weight: 500;
}

.c-town {
    fill: #2c3138;
    font-size: 45px;
    font-weight: 500;
}

.metro-sign {
    fill: #4a6580;
    stroke: #fff;
    stroke-width: 3;
}

.metro-letter {
    fill: #fff;
    font: 700 36px Roboto, sans-serif;
    text-anchor: middle;
}

.places use {
    fill: #fff;
    filter: drop-shadow(0 2px 2px rgba(0, 0, 0, 0.3));
}

.grey { fill: #78909c; }
.green { fill: #1aa974; }
.blue { fill: #0b96ff; }
.hotel { fill: #f949c8; }
.dot { fill: #fff; }

.line, .smile {
    fill: none;
    stroke: #fff;
    stroke-width: 3;
}

.smile {
    stroke: #0b96ff;
}

.brands use {
    fill: url(#brand);
}

.brands circle {
    fill: #fff;
}

.brands .black {
    fill: #0a0a0a;
}

.brands text {
    font-family: Roboto, sans-serif;
    font-weight: 700;
    font-size: 20px;
    text-anchor: middle;
}

.juico { fill: #cfe9df; }
.hot { fill: #f4701f; }
.sub-a { fill: #9cc0a0; }
.sub-b { fill: #a8cc1e; }

.brands .coffy {
    fill: #fff;
    font-size: 17px;
}

.brands .siren {
    fill: #1b7d4f;
}

.siren-line {
    fill: none;
    stroke: #e8f4ee;
    stroke-width: 3;
}

.dog {
    fill: #bcbcbc;
    stroke: #555;
    stroke-width: 2;
}

.pins, .pin {
    fill: #d98751;
    stroke: rgba(20, 12, 6, 0.65);
    stroke-width: 4;
}

.pins .selected {
    fill: #f58016;
    stroke: rgba(180, 90, 20, 0.5);
}

/* Status bar */
.status-bar {
    position: relative;
    display: grid;
    grid-template-columns: 1fr 376px 1fr;
    align-items: center;
    height: 110px;
    color: #000;
}

.clock {
    padding-left: 6px;
    font-family: Inter, sans-serif;
    font-size: 52px;
    font-weight: 600;
    text-align: center;
}

.island {
    height: 110px;
    border-radius: 55px;
    background: #000;
}

.signals {
    display: flex;
    justify-content: center;
    gap: 24px;
    padding: 0 4px 4px 0;
}

.dots {
    width: 66px;
    height: 42px;
    fill: rgba(0, 0, 0, 0.22);
}

.wifi {
    width: 56px;
    height: 42px;
}

.battery {
    width: 93px;
    height: 42px;
}

.shell {
    fill: none;
    stroke: rgba(0, 0, 0, 0.4);
    stroke-width: 3;
}

.nub {
    fill: rgba(0, 0, 0, 0.4);
}

/* Search */
.search-bar {
    position: relative;
    display: flex;
    height: 144px;
    margin-top: 57px;
    border-radius: 12px;
    background: #272727;
    box-shadow: 0 6px 30px rgba(0, 0, 0, 0.5);
}

.menu-btn {
    width: 147px;
    border-right: 3px solid #424242;
}

.search-field {
    flex: 1;
    display: flex;
    align-items: center;
    margin: 18px;
    padding: 0 24px;
    border-radius: 12px;
    background: #424242;
}

.search-field label {
    display: flex;
}

.search-field input {
    flex: 1;
    min-width: 0;
    margin: 0 24px;
    padding: 0;
    border: 0;
    outline: 0;
    background: none;
    color: #fff;
    font: inherit;
}

/* Result sheet */
.sheet {
    position: relative;
    display: flex;
    flex-direction: column;
    padding: 24px 24px 19px;
    border-radius: 24px 24px 0 0;
    background: #333;
}

.handle {
    flex: none;
    height: 12px;
    margin: 0 12px 24px;
    border-radius: 6px;
    background: #5f5f5f;
}

.sheet-head {
    display: flex;
    align-items: center;
    justify-content: space-between;
    margin-bottom: 24px;
    padding-left: 48px;
}

.sheet-head h1 {
    font-size: 60px;
    font-weight: 700;
    color: #f58016;
}

.sort-group {
    display: flex;
}

.sort-group button {
    width: 144px;
    height: 144px;
    border: 3px solid #4a4a4a;
}

.sort-group button + button {
    margin-left: -3px;
}

.sort-group button:first-child {
    border-radius: 12px 0 0 12px;
}

.sort-group button:last-child {
    border-radius: 0 12px 12px 0;
}

.sort-group .active {
    z-index: 1;
    border-color: #665240;
    background: #523f30;
    color: #f58016;
}

.az {
    font: 500 48px Roboto, sans-serif;
}

.az-bold {
    font: 900 38px Roboto, sans-serif;
    text-anchor: middle;
}

.list {
    flex: 1;
    min-height: 0;
    overflow: hidden;
    border-radius: 12px;
}

.card {
    margin-bottom: 24px;
    border-left: 12px solid #808080;
    border-radius: 12px;
    background: #1e1e1e;
    box-shadow: 0 3px 6px rgba(0, 0, 0, 0.3);
}

.nearest {
    border-left-color: #f50057;
}

.card-head, .card-meta, .card-body {
    border-bottom: 3px solid #383838;
}

.card-head {
    display: flex;
    align-items: center;
    gap: 24px;
    height: 122px;
    padding: 0 24px;
}

.card-head h2 {
    font-size: 40px;
    font-weight: 400;
}

.card-meta {
    display: flex;
    align-items: center;
    justify-content: space-between;
    height: 87px;
    padding: 0 24px;
    font-size: 40px;
}

.card-meta strong {
    font-size: 42px;
}

.card-meta span {
    color: #bbb;
}

.card-body {
    padding: 24px 24px 19px;
    line-height: 78px;
}

.card-body p + p {
    margin-top: 16px;
}

.card-body .icon {
    margin-right: 24px;
    vertical-align: -22px;
}

.card-actions {
    display: flex;
    justify-content: flex-end;
    padding: 24px;
}

.card-actions button {
    width: 120px;
    height: 120px;
}

/* Bottom navigation */
.bottom-nav {
    position: relative;
    display: flex;
    flex-direction: column;
    gap: 114px;
    padding: 50px 48px 24px;
    background: #272727;
}

.nav-items {
    display: flex;
}

.nav-items button, .nav-gap {
    flex: 1;
}

.nav-items .icon {
    width: 90px;
    height: 90px;
}

.nav-items .active {
    color: #f58016;
}

.map-btn {
    position: absolute;
    top: 0;
    left: 50%;
    width: 156px;
    height: 156px;
    border-radius: 24px;
    background: #f58016;
    box-shadow: 0 0 24px rgba(0, 0, 0, 0.6);
    transform: translate(-50%, -50%) rotate(45deg);
}

.map-btn .icon {
    width: 108px;
    height: 108px;
    transform: rotate(-45deg);
}

.home-indicator {
    align-self: center;
    width: 462px;
    height: 15px;
    border-radius: 8px;
    background: #4a4a4a;
}
```
